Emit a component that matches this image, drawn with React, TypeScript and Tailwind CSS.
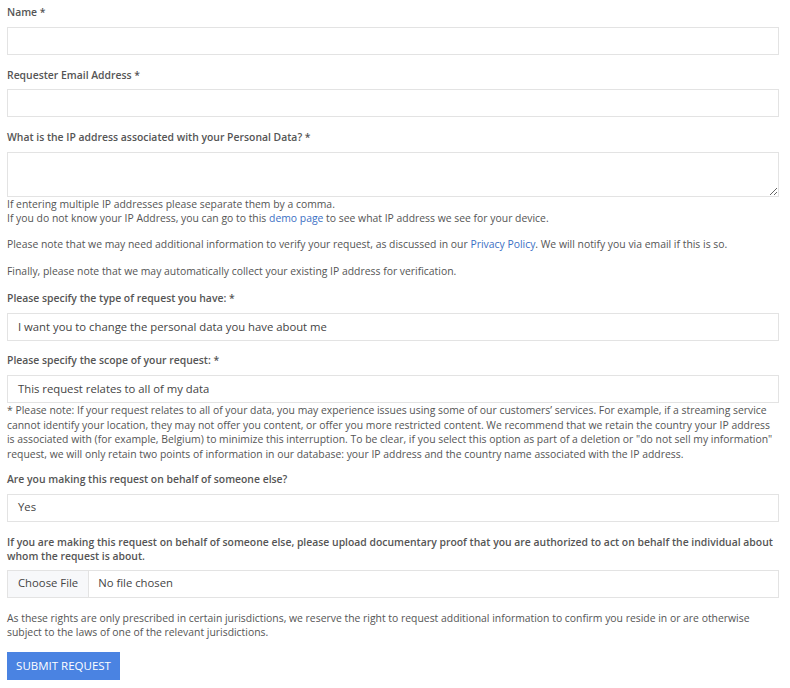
const Label = ({ children, className = '' }: { children: React.ReactNode; className?: string }) => (
  <label className={`block text-[10.4px] font-semibold text-[#555] leading-[14px] ${className}`}>{children}</label>
)

const Box = ({ children }: { children?: React.ReactNode }) => (
  <div className="w-full h-[28px] border border-[#e3e3e3] bg-white flex items-center px-[10px] text-[11.3px] text-[#444]">
    {children}
  </div>
)

export default function App() {
  return (
    <div className="bg-white min-h-[688px] pl-[7px] pr-[11px] pt-[5px] text-[#555]" style={{ fontFamily: '"Open Sans", sans-serif' }}>
      <Label className="mb-[8px]">Name *</Label>
      <Box />

      <Label className="mt-[13px] mb-[7px]">Requester Email Address *</Label>
      <Box />

      <Label className="mt-[13px] mb-[8px]">What is the IP address associated with your Personal Data? *</Label>
      <textarea className="block w-full h-[45px] border border-[#e3e3e3] bg-white outline-none resize-y" />
      <p className="text-[10.4px] leading-[14px]">If entering multiple IP addresses please separate them by a comma.</p>
      <p className="text-[10.4px] leading-[14px]">
        If you do not know your IP Address, you can go to this <a href="#" className="text-[#3b6fc4]">demo page</a> to see what IP address we see for your device.
      </p>
      <p className="text-[10.4px] leading-[14px] mt-[12px]">
        Please note that we may need additional information to verify your request, as discussed in our <a href="#" className="text-[#3b6fc4]">Privacy Policy</a>. We will notify you via email if this is so.
      </p>
      <p className="text-[10.4px] leading-[14px] mt-[13px]">Finally, please note that we may automatically collect your existing IP address for verification.</p>

      <Label className="mt-[13px] mb-[8px]">Please specify the type of request you have: *</Label>
      <Box>I want you to change the personal data you have about me</Box>

      <Label className="mt-[12px] mb-[8px]">Please specify the scope of your request: *</Label>
      <Box>This request relates to all of my data</Box>
      <p className="text-[10.4px] leading-[14.7px]">
        * Please note: If your request relates to all of your data, you may experience issues using some of our customers’ services. For example, if a streaming service cannot identify your location, they may not offer you content, or offer you more restricted content. We recommend that we retain the country your IP address is associated with (for example, Belgium) to minimize this interruption. To be clear, if you select this option as part of a deletion or "do not sell my information" request, we will only retain two points of information in our database: your IP address and the country name associated with the IP address.
      </p>

      <Label className="mt-[10px] mb-[8px]">Are you making this request on behalf of someone else?</Label>
      <Box>Yes</Box>

      <Label className="mt-[13px] mb-[7px]">
        If you are making this request on behalf of someone else, please upload documentary proof that you are authorized to act on behalf the individual about whom the request is about.
      </Label>
      <div className="w-full h-[28px] border border-[#e3e3e3] bg-white flex items-stretch text-[11.3px] text-[#444]">
        <div className="bg-[#f7f8fa] border-r border-[#e3e3e3] px-[10px] flex items-center">Choose File</div>
        <div className="px-[9px] flex items-center">No file chosen</div>
      </div>

      <p className="text-[10.4px] leading-[14px] mt-[13px]">
        As these rights are only prescribed in certain jurisdictions, we reserve the right to request additional information to confirm you reside in or are otherwise subject to the laws of one of the relevant jurisdictions.
      </p>
      <button className="mt-[13px] h-[28px] w-[113px] bg-[#4a83e2] text-white text-[11.5px] uppercase block">Submit Request</button>
    </div>
  )
}
